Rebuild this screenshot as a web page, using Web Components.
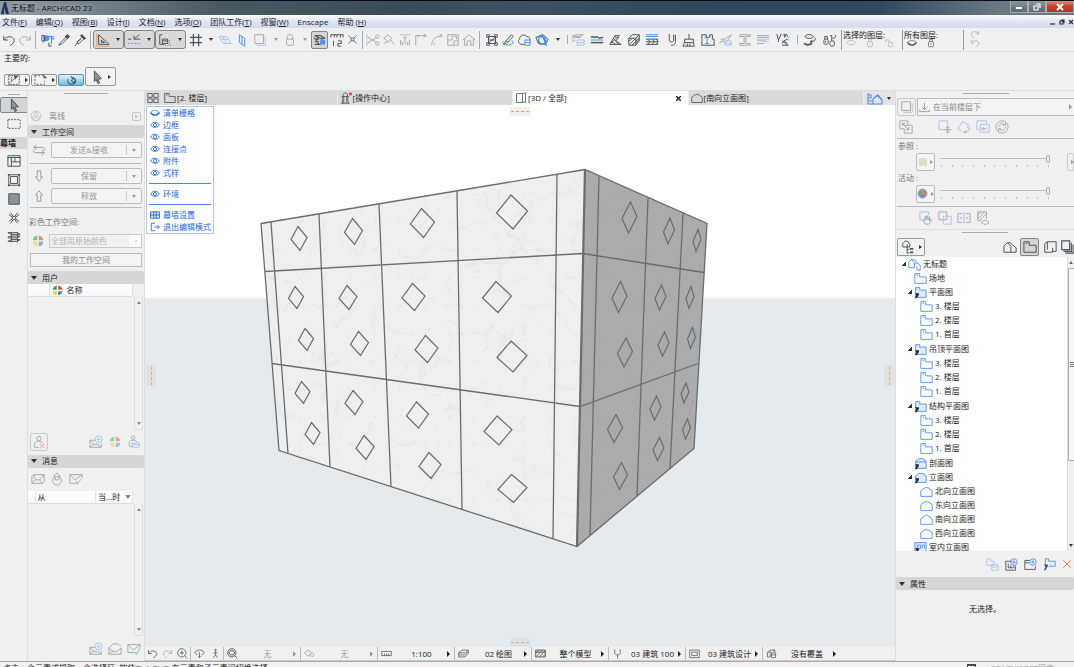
<!DOCTYPE html>
<html lang="zh-CN">
<head>
<meta charset="utf-8">
<title>无标题 - ARCHICAD 23</title>
<style>
    html, body {
        margin: 0;
        height: 100%;
        overflow: hidden;
    }
    body {
        font: 8px/12px "Open Sans", "Noto Sans CJK SC", sans-serif;
        color: #222;
        background: #f0f0f0;
    }
</style>
</head>
<body>
<cad-app></cad-app>

<script>
// Icon artwork, 16x16. "b" = blue accent stroke, "k" = solid fill
const ICONS = {
    undo: '<path d="M2 3v5h5M2 8c3-5 11-5 12 0 0 3-2 5-5 6"/>',
    redo: '<path d="M14 3v5H9M14 8C11 3 3 3 2 8c0 3 2 5 5 6"/>',
    find: '<circle class="bf" cx="6" cy="6" r="3.5"/><path d="M2 2l2 2M2 11l2-2M9 11v4h3M1 3h3v6H1z"/><path class="b" d="M8 4h6v4M12 5v8M10 3l4 4"/>',
    pick: '<path class="k" d="M9 4l3-3 3 3-3 3z"/><path d="M10 5L4 11 2 14l4-2 6-6"/><path class="b" d="M3 12l5-5"/>',
    inject: '<path class="k" d="M8 3l2-2 5 5-2 2z"/><path d="M10 5L5 10M12 7l-5 5H5v-3M5 11l-3 4"/><path class="b" d="M5 11l4-4"/>',
    guide: '<path d="M3 2v11h12zM6 8v3h4z"/><path class="o" d="M1 1v14h14"/>',
    snap: '<path d="M1 7h4M14 2L8 7h7M8 3v4"/><path class="b" stroke-dasharray="2 2" d="M1 12h14"/>',
    tracker: '<path d="M2 2v11h5M2 2h3M5 7h6v5H5zM5 9h6"/><path stroke-dasharray="1 2" d="M8 14h7M13 8v5"/>',
    grid: '<path d="M5 1v14M11 1v14M1 5h14M1 11h14" stroke-width="1.4"/>',
    plane: '<path class="b" d="M1 4h9l5 8H6zM5 4l5 8M3 7h9"/>',
    vplane: '<path class="b" d="M5 2l6 4v9l-6-4zM8 4v9"/>',
    box: '<path d="M2 2h10v10H2z"/><path class="b" d="M4 14h10V4"/>',
    lock: '<rect x="4" y="7" width="8" height="7" rx="1"/><path d="M5 7V4c0-3 6-3 6 0v3"/>',
    trace: '<path d="M2 3h6l6 3H8zM2 7h5M2 13h7M2 10h4v3M5 3v4M9 6l4 7M1 5l4 5" stroke-width="1.2"/><circle class="bf" cx="11" cy="10" r="3"/>',
    ruler: '<path d="M1 2h14v3M1 2v3M5 2v3M8 2v3M12 2v3M4 9v6M9 9h4v3H9v3h4"/>',
    burst: '<path d="M2 2l4 4M14 2l-4 4M2 14l4-4M14 14l-4-4M6 6h4v4H6z"/>',
    scissors: '<path d="M1 4l11 7M1 12l11-7"/><path class="b" d="M1 1v14" stroke-dasharray="2 2"/><circle cx="13" cy="12" r="2"/><circle cx="13" cy="4" r="2"/>',
    axe: '<path d="M2 6l5-4 4 4-4 5-2-3zM9 7l5 6M2 12l4-2"/>',
    adjust: '<path class="b" d="M2 2h12"/><path d="M8 4v9M6 6l2-2 2 2M3 8v6M13 8v6M5 10v4M11 10v4"/>',
    corner: '<path d="M2 14V3h12M5 3v2M11 1l3 2-3 2"/>',
    fillet: '<path d="M2 14c0-6 4-10 11-11M5 14v-2M11 5l3-2-3-2"/>',
    resize: '<path d="M2 2h12v12H2zM2 8h5V2M9 14V9h5M9 4h3v3"/>',
    house: '<path d="M1 8l7-6 7 6M3 7v7h3V9h4v5h3V7"/>',
    group: '<rect x="4" y="4" width="8" height="8"/><path d="M2 2h3v3H2zM11 2h3v3h-3zM2 11h3v3H2zM11 11h3v3h-3zM4 12l8-8M4 8h8"/>',
    pen: '<path d="M4 11l8-9 2 2-8 8-3 1zM6 9l2 2"/><path class="b" d="M3 9c-4 3 3 6 9 4 3-2 2-4 0-4"/>',
    cloud: '<path d="M8 13H5c-4-1-4-5-2-6 0-5 6-6 8-3 3 0 4 2 4 4"/><path class="b" d="M9 8h6v6H9zM9 11h6"/>',
    cubes: '<path d="M1 5l8-3 6 5-3 6-8-1z"/><path class="b" d="M5 4l6 1 2 6-6 2-3-4zM8 1l5 14" stroke-width="1.5"/>',
    layers: '<path d="M1 4l4-2h9l-4 2zM1 7l4-2h6M5 8l-4 2"/><path class="b" d="M7 8h8v6H7zM7 11h8"/>',
    waves: '<path d="M1 5c2-2 3 0 4 0s2-2 4 0 3 0 6 0" stroke-width="1.6"/><path class="b" d="M1 8h14"/><path d="M1 11h14" stroke-width="1.6"/>',
    hatchA: '<path d="M2 13L8 3h5l-4 6 6 4zM4 10l5 3M6 6l6 7M8 4l4 2M3 12l6-6"/>',
    hatchB: '<path d="M2 6l4-4h8v7l-4 5H2zM2 6h8v8M10 6l4-4M2 10l4-4M3 13l7-7M6 14l8-9M10 12l4-5"/>',
    strata: '<path class="b" d="M1 2h14M1 4h14"/><path d="M1 7h14M1 10h14M1 13h14M3 7l3 3-3 3M8 7l3 3-3 3M13 7l2 3-2 3"/>',
    magnet: '<path d="M6 1v7c0 3 5 3 5 0V2M13 2v8c0 4-4 4-5 4"/>',
    brush: '<path d="M8 1v6M3 7h10v4H3zM3 11l-2 4h13l-1-4M6 12v3M9 12v3"/>',
    plan: '<path d="M1 2h5v3h4V2h3v5h2v7H1z"/><path class="b" d="M4 5h6M7 5v7M5 12h4"/>',
    note: '<path d="M5 8l9-6-5 8M1 10h6M2 7h4"/><path class="b" d="M7 9h7v5H7zM7 12h7M1 12c0-3 4-4 6-2"/>',
    beam: '<path d="M2 2h12v2H9v8h5v2H2v-2h5V4H2z"/>',
    stack: '<path d="M1 3h14M1 5h14M1 9h10M1 12h8"/><path class="b" d="M1 7h14M9 10h6"/>',
    hatchC: '<path d="M2 1l2 7 3-7M4 8v2M9 3l2-2v4l2-4 2 4M8 9l7 5M8 12l5-5 2 1M8 14h7M10 8l4 4"/>',
    eyeSwap: '<path d="M2 4c3-3 7-3 10 0-3 3-7 3-10 0M13 5c3 3-1 5-4 5M11 8l-3 2 3 2"/><path d="M1 12c3 2 6 2 9 0" stroke-width="2"/>',
    lockSwap: '<rect x="1" y="7" width="5" height="6" rx="2"/><path d="M2 7V4h3v3"/><rect x="8" y="9" width="5" height="6" rx="2"/><path d="M10 9V3H8M11 6c4 0 4-2 3-4M3 9v2"/>',
    eye: '<path d="M1 8c4-6 10-6 14 0-4 5-10 5-14 0z" stroke-width="1.4"/><circle cx="8" cy="8" r="2.5" stroke-width="1.4"/>',
    eyeShut: '<path d="M1 7c3-4 11-4 14 0"/><path d="M1 7c3 6 11 6 14 0" stroke-width="2"/>',
    eyeOpen: '<path d="M1 7c4-4 10-4 14 0-3 5-11 5-14 0z"/>',
    padlock: '<rect x="4" y="6" width="8" height="8" rx="2"/><path d="M6 6V2h4v4M8 9v2"/>',
    unlock: '<rect x="7" y="7" width="7" height="7" rx="2"/><path d="M8 7V3H3v4"/>',
    arrow: '<path class="g" d="M5 1l8 9-4 .5 2 4-2 1-2-4.5-2 2z"/>',
    marquee: '<path d="M1 3h14v10H1z" stroke-dasharray="2 1.5"/>',
    pickbox: '<path d="M1 3h9M1 3v10h11V9" stroke-dasharray="2 2"/><path class="k" d="M10 1l5 5h-4z"/>',
    wallpick: '<path d="M2 3h12v10H2zM2 13l5-5M5 9V5l3 3" stroke-dasharray="2 1"/><path class="k" d="M8 3h5L9 8z"/>',
    spin: '<path d="M3 6c-2 4 2 9 7 7 5-1 5-7 1-9M11 4L8 8l3 3 3-3zM7 2l3 3" stroke-width="1.5"/>',
    scheme: '<path d="M1 2h14v12H1zM1 4h14M5 4v10M9 4v5h6M5 9h4"/>',
    frame: '<path d="M2 2h12v12H2z"/><path d="M4 4h8v8H4z"/><path class="k" d="M1 1h2v2H1zM13 1h2v2h-2zM1 13h2v2H1zM13 13h2v2h-2z"/>',
    panel: '<path class="g" d="M2 2h12v12H2z"/>',
    joint: '<path d="M2 4l4 3M14 4l-4 3M2 12l4-3M14 12l-4-3M4 2l3 4M12 2L9 6M4 14l3-4M12 14l-3-4"/><circle cx="8" cy="8" r="2"/>',
    accessory: '<path d="M1 3l4 2h10l-3-2zM1 8l4-1h10l-3 2H1M1 13l4-2h10l-4 2zM5 2v12M12 3v11"/>',
    tiles: '<path d="M1 2h6v5H1zM9 2h6v5H9zM1 9h6v5H1zM9 9h6v5H9z"/>',
    folder: '<path d="M1 2h6v4h8v8H1zM3 4h2"/>',
    lighthouse: '<path d="M4 6l-1 9M10 6l1 9M2 6h10M4 6V3l3-2 3 2v3M5 6v9M9 6v9M1 15h12"/><circle cx="14" cy="2.5" r="2.2" fill="#f05030" stroke="none"/>',
    view3d: '<path d="M2 2h8v12H2zM10 2l4-1v13l-4-1"/>',
    elevation: '<path d="M1 14V7l4-3 3-1 3 1 4 3v7z"/>',
    town: '<path class="b" d="M1 3v11h14v-4l-4-5-5 4v5M1 5h3v3H1M1 11h5M8 6h3l3 3"/>',
    table: '<path d="M1 3h14v10H1zM1 8h14M6 3v10M10 3v10" stroke-width="1.6"/>',
    exit: '<path d="M8 2H2v12h6M7 8h8M12 5l3 3-3 3" stroke-width="1.4"/>',
    people: '<circle cx="8" cy="8" r="6.5"/><circle cx="8" cy="5" r="2"/><circle cx="5" cy="10" r="2"/><circle cx="11" cy="10" r="2"/>',
    expand: '<rect x="1" y="1" width="14" height="14" rx="2"/><path class="k" d="M6 5l4 3-4 3z"/>',
    swap: '<path d="M5 2L2 5l3 3M2 5h9c4 0 4 3 3 4M11 8l3 3-3 3M14 11H5c-4 0-4-2-3-3"/>',
    down: '<path d="M6 2h4v7h2l-4 5-4-5h2z"/>',
    up: '<path d="M6 14h4V7h2L8 2 4 7h2z"/>',
    wheel: '<path fill="#2fa866" stroke="none" d="M7 1v6H1a6 6 0 016-6z"/><path fill="#f0452e" stroke="none" d="M9 1v6h6a6 6 0 00-6-6z"/><path fill="#f5d322" stroke="none" d="M7 15V9H1a6 6 0 006 6z"/><path fill="#3f7fe8" stroke="none" d="M9 15V9h6a6 6 0 01-6 6z"/>',
    rgb: '<path fill="#e6725c" stroke="none" d="M8 8V2a6 6 0 015 9z"/><path fill="#58a88a" stroke="none" d="M8 8V2a6 6 0 00-5 9z"/><path fill="#6588d8" stroke="none" d="M8 8l5 3a6 6 0 01-10 0z"/><circle cx="8" cy="8" r="6.5"/>',
    userX: '<circle cx="8" cy="4" r="2.5"/><path d="M8 7c-5 0-6 3-5 7h5M8 7c2 0 4 1 4 2"/><path class="r" d="M9 10l5 5M14 10l-5 5"/>',
    userDoc: '<circle cx="7" cy="3" r="2"/><path d="M7 6c-5 0-5 4-4 7h3M7 6c3 0 4 1 4 2"/><path class="b" d="M6 9h8v5H6zM6 11h8"/>',
    mailPlus: '<path d="M1 6h6M1 6v8h13v-4M1 6l5 5h4M1 14l5-4M14 14l-4-3"/><circle class="b" cx="11" cy="5" r="4"/><path class="b" d="M11 3v4M9 5h4"/>',
    mail: '<path d="M3 3h12v8l-2 2H1V5zM1 13l4-4h5l3 4M3 3l2 6M15 3l-5 6"/>',
    upload: '<circle cx="8" cy="10" r="5"/><path d="M6 9V5H4l4-4 4 4h-2v4z"/>',
    mailEdit: '<path d="M1 3h14v4M1 3v10h7M1 3l6 6 8-6M9 14l5-6M8 10l2 4"/>',
    mailOpen: '<path d="M1 14V7l5-5h5M1 7l5 4h4l5-4v7H1l5-4"/><path class="b" d="M9 3h4l2 3"/>',
    mailOk: '<path d="M8 12H1V3h14v3M1 3l6 6 8-6"/><path class="gr" d="M8 11l3 3 4-8"/>',
    under: '<path d="M8 1v10M4 7l4 4 4-4M1 11v3h14v-3"/>',
    moveScale: '<path d="M1 1h9v5M1 1v9h5M7 6h8v9H6v-5M4 4l7 7M4 7V4h3M11 8v3H8"/>',
    boxMove: '<path class="b" d="M8 11H1V1h10v5"/><path d="M11 7v8M7 11h8M9 9l2-2 2 2M9 13l2 2 2-2"/>',
    boxRotate: '<path class="b" d="M6 2l7 3-1 4M6 2L1 10l5 3"/><path d="M14 8c1 4-2 6-6 6M10 12l-2 2 2 1"/>',
    boxBack: '<path class="b" d="M4 11H1V1h11v3M5 5h10v9H5z"/><path d="M12 10H7M9 8l-2 2 2 2"/>',
    refresh: '<circle cx="8" cy="8" r="7"/><path d="M4 8c0-4 6-5 7-2M12 8c0 4-6 5-7 2M9 6h3V3M7 10H4v3"/>',
    hand: '<path class="b" d="M6 10H1V1h10v4"/><path d="M7 15c-1-3-3-4-2-5l2 1V6l2 4V5l2 5 1-4v5l2-2c0 3-1 5-3 6z"/>',
    overlap: '<path d="M1 1h9v9H1z"/><path class="b" d="M6 6h9v9H6z"/>',
    split: '<path d="M6 3H1v10h5M10 3h5v10h-5M3 8h3M13 8h-3"/><path class="b" d="M8 1v14"/>',
    hatchEye: '<path d="M2 1h10v8M2 1v10h4M2 5l4-4M2 9l8-8M5 10l7-7M6 13c3-3 6-3 9 0-3 3-6 3-9 0z"/>',
    tree: '<path d="M2 8V4l3-3 3 1 2 3v3H7V5M2 8h5v7h2M7 11h2"/><path class="k" d="M10 9h4v2h-4zM10 13h4v2h-4z"/>',
    homes: '<path d="M1 14V7l4-4 4 4v7zM5 3h3l7 6v5H9"/>',
    book: '<path d="M5 2h10v11h-4M5 2v9M5 2L2 4v10h9V9"/>',
    docs: '<path d="M2 1h9v10H2zM4 13h9V3M6 15h9V5" stroke-width="1.3"/>',
    root: '<path class="b" d="M1 12V5l3-3 4 4v6zM8 8l3-2 4 3v6h-4v-5M4 2h3l5 4"/>',
    folderB: '<path class="b" d="M1 2h6v4h8v8H1zM3 4h2"/>',
    folderS: '<path class="b bfl" d="M2 2h5v3h8v9H2z"/><path class="k" d="M1 9h5v2L3 15H1l2-4z"/>',
    elevB: '<path class="b" d="M1 14V7l4-3 3-1 3 1 4 3v7z"/>',
    elevS: '<path class="b bfl" d="M2 14V6l4-3h5l4 3v8z"/><path class="k" d="M1 9h5v2L3 15H1l2-4z"/>',
    sectS: '<path class="b bfl" d="M2 14V5l4-3h5l4 3v9zM2 6h13"/><path class="k" d="M1 9h5v2L3 15H1l2-4z"/>',
    interior: '<path class="b bfl" d="M1 2h14v12H1zM4 5h4v4H4zM10 9V5h3v4"/><path class="k" d="M1 9h5v2L3 15H1l2-4z"/>',
    copyB: '<path class="b" d="M1 1h5v3h4v5H1z"/><path class="b" d="M7 8h8v7H7zM7 11h8"/>',
    addView: '<path d="M8 4H1v11h12v-5M4 7v5h7V9M7 12V9"/><circle class="b" cx="11" cy="5" r="4"/><path class="b" d="M11 3v4M9 5h4"/>',
    addFolder: '<path d="M7 3H1v11h13v-4M1 6h5"/><circle class="b" cx="11" cy="5" r="4"/><path class="b" d="M11 3v4M9 5h4"/>',
    link: '<path class="b" d="M3 8V1h4v3h8v6H7"/><path class="k" d="M1 8h5v2L3 15H1l2-4z"/>',
    cross: '<path class="r" d="M2 2l12 12M14 2L2 14"/>',
    zoomIn: '<circle cx="7" cy="7" r="6"/><path d="M7 4v6M4 7h6M11 11l4 4"/>',
    orbit: '<path d="M5 10C-1 8 1 3 8 3s9 5 3 7M8 6v8M6 12l2 2 2-2"/>',
    walk: '<circle cx="8" cy="3" r="1.2"/><path d="M8 5v5l-3 4M8 10l3 4M5 8l3-2 3 2"/>',
    fit: '<circle cx="7" cy="7" r="6"/><path d="M11 11l4 4M5 4L3 7l2 3M9 4l2 3-2 3M5 4h4M5 10h4"/>',
    loupe: '<path d="M1 7l5-4 5 4-5 5zM8 9l4 4 3-3-4-4"/>',
    scale: '<path d="M1 5h14v6H1zM5 8v3M8 8v3M11 8v3"/>',
    sheets: '<path d="M1 7l5-4h9l-4 4zM1 7v6h9l5-5V3M1 10h9l5-5"/>',
    hatch: '<path d="M1 3h14v10H1zM1 8l5-5M1 13L11 3M6 13l9-9M11 13l4-4M1 6h14" stroke-width="1.3"/>',
    fork: '<path d="M4 2v5c0 4 8 4 8 0V2M8 10v5"/>',
    viewOpt: '<path d="M1 3h14v11H1z"/><path d="M4 6h8v5H4z"/>',
    override: '<path d="M8 6H2v7h4V8M8 7h6v7H8zM8 10h6M4 6l2-3h6l2 2M12 2v4"/>'
};

// registers an element whose shadow root holds the given template
function define(name, html, setup) {
    const template = document.createElement('template');
    template.innerHTML = `<style>*{box-sizing:border-box}button,select,input{font:inherit;color:inherit;margin:0}</style>` + html;
    customElements.define(name, class extends HTMLElement {
        constructor() {
            super();
            this.attachShadow({ mode: 'open' });
        }
        connectedCallback() {
            if (this.shadowRoot.childNodes.length) return;
            const root = template.content.cloneNode(true);
            if (setup) setup(this, root);
            this.shadowRoot.appendChild(root);
        }
    });
}

define('ui-icon', `
<style>
:host { display: inline-block; flex: none; width: var(--icon, 14px); height: var(--icon, 14px); }
svg { display: block; width: 100%; height: 100%; fill: none; stroke: currentColor; stroke-width: 1.1; }
.b { stroke: #4a90f0; }
.bfl { fill: #dcebff; }
.bf { fill: #4a90f0; stroke: none; }
.o { stroke: #f29a4c; }
.r { stroke: #f0806c; stroke-width: 1.6; }
.gr { stroke: #4cb878; stroke-width: 1.6; }
.k { fill: currentColor; stroke: none; }
.g { fill: #8c9296; }
</style>
<svg viewBox="0 0 16 16" aria-hidden="true"></svg>
`, (el, root) => {
    root.querySelector('svg').innerHTML = ICONS[el.getAttribute('name')] || '';
});

define('tool-button', `
<style>
:host { display: block; flex: none; width: var(--w, 16px); color: #4b5459; }
:host([dim]) { opacity: .45; }
button { display: flex; align-items: center; justify-content: center; width: 100%; height: var(--h, 18px); padding: 0; border: 1px solid transparent; border-radius: 2px; background: none; }
:host([caret]) { --w: 11px; }
:host([boxed]) button { border-color: #9a9a9a; background: #f2f2f2; }
:host([pressed]) button { border-color: #858585; background: #d4d4d4; }
i { border: 2px solid transparent; border-top: 3px solid #333; border-bottom: 0; }
.side { margin-left: 4px; border: 2px solid transparent; border-left: 3px solid #333; border-right: 0; }
</style>
<button type="button"></button>
`, (el, root) => {
    const button = root.querySelector('button');
    const icon = el.getAttribute('icon');
    button.setAttribute('aria-label', el.getAttribute('label') || icon || '更多');
    if (icon) button.innerHTML = `<ui-icon name="${icon}"></ui-icon>`;
    if (el.hasAttribute('caret')) button.innerHTML += '<i></i>';
    if (el.hasAttribute('side')) button.innerHTML += '<i class="side"></i>';
    button.disabled = el.hasAttribute('dim');
});

define('tool-group', `
<style>
:host { display: flex; flex: none; align-items: center; gap: var(--gap, 0px); padding: 0 2px; height: 18px; }
:host([line]) { border-right: 1px solid #aaa; }
:host([lead]) { border-left: 1px solid #aaa; }
:host([framed]) { padding: 0; border: 1px solid #858585; border-radius: 3px; background: #d9d9d9; height: 19px; }
</style>
<slot></slot>
`);

define('title-bar', `
<style>
:host { display: flex; align-items: center; height: 15px; padding-left: 1px; border-top: 1px solid #0a0c10; background: linear-gradient(90deg, #909ba3, #78848d 8%, #4b5963 20%, #3b4a58 38%, #3f5160 48%, #33475a 65%, #34485c 82%, #6a7884 93%); color: #0b0b0b; text-shadow: 0 0 4px #cfd6da; }
.logo { width: 8px; height: 12px; margin-right: 2px; fill: #1d3464; }
span { flex: 1; }
.win { display: flex; align-self: flex-start; }
button { width: 18px; height: 12px; padding: 0; border: 1px solid #a5b0b8; border-top: 0; background: linear-gradient(#8b979f, #5b6771); display: grid; place-items: center; }
button:last-child { width: 28px; background: linear-gradient(#d99080, #c0402a 50%, #b03820); }
svg { width: 8px; height: 8px; fill: none; stroke: #fff; stroke-width: 2; display: block; }
.logo { stroke: none; }
</style>
<svg class="logo" viewBox="0 0 8 12"><path d="M0 12L3 0h2l3 12H5L3 5v7z"/></svg>
<span>无标题 - ARCHICAD 23</span>
<div class="win">
    <button aria-label="最小化"><svg viewBox="0 0 8 8"><path d="M1 5h6"/></svg></button>
    <button aria-label="还原"><svg viewBox="0 0 8 8"><path d="M3 1h4v4M1 3h4v4H1z" stroke-width="1.2"/></svg></button>
    <button aria-label="关闭"><svg viewBox="0 0 8 8"><path d="M1 1l6 6M7 1L1 7"/></svg></button>
</div>
`);

define('menu-bar', `
<style>
:host { display: flex; align-items: center; justify-content: space-between; height: 13px; padding: 0 0 0 2px; background: linear-gradient(#fafbfd, #dfe5f3 50%, #d3daed); }
nav { display: flex; gap: 9px; }
button { padding: 0; border: 0; background: none; line-height: 12px; white-space: pre; }
.mdi { display: flex; gap: 3px; }
svg { display: block; width: 6px; height: 6px; fill: none; stroke: #333; stroke-width: 1.2; }
</style>
<nav></nav>
<div class="mdi">
    <button aria-label="最小化"><svg viewBox="0 0 6 6"><path d="M0 5h5"/></svg></button>
    <button aria-label="还原"><svg viewBox="0 0 6 6"><path d="M2 1h3v3M1 2h3v3H1z"/></svg></button>
    <button aria-label="关闭"><svg viewBox="0 0 6 6"><path d="M1 1l4 4M5 1L1 5"/></svg></button>
</div>
`, (el, root) => {
    const menus = ['文件(F)', '编辑(Q)', '视图(B)', '设计(I)', '文档(N)', '选项(O)', '团队工作(T)', '视窗(W)', 'Enscape', '帮助 (H)'];
    root.querySelector('nav').innerHTML = menus
        .map(m => `<button type="button">${m.replace(/\((.)\)/, '(<u>$1</u>)')}</button>`).join('');
});

define('main-toolbar', `
<style>
:host { display: flex; align-items: center; height: 24px; border-bottom: 1px solid #ddd; overflow: hidden; }
.history { padding: 0 2px 0 1px; margin-right: 2px; }
.patterns { justify-content: space-between; width: 230px; height: 9px; padding-right: 7px; }
.toggles { --gap: 4px; height: 9px; padding: 0 3px 0 4px; }
.layer { flex: none; display: flex; flex-direction: column; height: 20px; line-height: 9px; padding: 0 4px 0 1px; border-left: 1px solid #999; --icon: 10px; --h: 9px; }
.layer.wide { width: 61px; }
.layer.turn { --w: 20px; }
.layer div { display: flex; gap: 3px; }
</style>
<tool-group class="history" line>
    <tool-button icon="undo" label="撤销"></tool-button><tool-button icon="redo" label="重做" dim></tool-button>
</tool-group>
<tool-group line>
    <tool-button icon="find"></tool-button><tool-button icon="pick"></tool-button><tool-button icon="inject"></tool-button>
</tool-group>
<tool-group framed style="margin-left:2px"><tool-button icon="guide" style="--w:18px"></tool-button><tool-button caret></tool-button></tool-group>
<tool-group framed><tool-button icon="snap" style="--w:18px"></tool-button><tool-button caret></tool-button></tool-group>
<tool-group framed><tool-button icon="tracker" style="--w:18px"></tool-button><tool-button caret></tool-button></tool-group>
<tool-group style="--gap:1px">
    <tool-button icon="grid"></tool-button><tool-button caret></tool-button>
    <tool-button icon="plane" dim></tool-button><tool-button icon="vplane"></tool-button>
    <tool-button icon="box" dim style="--w:18px"></tool-button><tool-button caret dim></tool-button>
    <tool-button icon="lock" dim></tool-button><tool-button caret dim></tool-button>
    <tool-button icon="trace" pressed style="--w:17px"></tool-button><tool-button icon="ruler" style="--w:15px"></tool-button>
    <tool-button icon="burst" style="--w:15px;--icon:11px"></tool-button>
</tool-group>
<tool-group lead line>
    <tool-button icon="scissors" dim></tool-button><tool-button icon="axe" dim></tool-button><tool-button icon="adjust" dim></tool-button>
    <tool-button icon="corner" dim></tool-button><tool-button icon="fillet" dim></tool-button><tool-button icon="resize" dim></tool-button>
    <tool-button icon="house" dim></tool-button>
</tool-group>
<tool-group style="padding:0 4px">
    <tool-button icon="group"></tool-button><tool-button icon="pen"></tool-button><tool-button icon="cloud"></tool-button>
    <tool-button icon="cubes" style="--w:20px"></tool-button><tool-button caret></tool-button>
</tool-group>
<tool-group class="patterns" lead>
    <tool-button icon="layers" dim></tool-button><tool-button icon="waves"></tool-button><tool-button icon="hatchA"></tool-button>
    <tool-button icon="hatchB"></tool-button><tool-button icon="strata"></tool-button><tool-button icon="magnet"></tool-button>
    <tool-button icon="brush"></tool-button><tool-button icon="plan"></tool-button><tool-button icon="note" dim></tool-button>
    <tool-button icon="beam" dim></tool-button><tool-button icon="stack" dim></tool-button><tool-button icon="hatchC"></tool-button>
</tool-group>
<tool-group class="toggles" lead>
    <tool-button icon="eyeSwap"></tool-button><tool-button icon="lockSwap"></tool-button>
</tool-group>
<div class="layer wide">选择的图层:<div><tool-button icon="eyeOpen" dim></tool-button><tool-button icon="padlock" dim></tool-button><tool-button icon="unlock" dim></tool-button></div></div>
<div class="layer wide">所有图层:<div><tool-button icon="eyeShut"></tool-button><tool-button icon="padlock"></tool-button></div></div>
<div class="layer turn"><tool-button icon="redo" dim></tool-button><tool-button icon="undo" dim></tool-button></div>
`);

define('info-box', `
<style>
:host { display: block; height: 39px; padding-left: 4px; border-bottom: 1px solid #ddd; overflow: hidden; }
label { display: block; height: 12px; line-height: 11px; }
div { display: flex; align-items: flex-end; gap: 1px; padding-top: 3px; --h: 12px; --w: 26px; }
.big { --h: 19px; --w: 31px; }
.on { background: linear-gradient(#e2f2fb, #6fb9e2); border: 1px solid #5d93b3; border-radius: 2px; --icon: 11px; --h: 10px; --w: 24px; }
</style>
<label>主要的:</label>
<div>
    <tool-button icon="wallpick" side boxed></tool-button>
    <tool-button icon="pickbox" side boxed></tool-button>
    <span class="on"><tool-button icon="spin"></tool-button></span>
    <tool-button icon="arrow" class="big" side boxed></tool-button>
</div>
`);

define('tool-box', `
<style>
:host { display: flex; flex-direction: column; align-items: center; width: 28px; border-right: 1px solid #ddd; overflow: hidden; }
hr { width: 12px; margin: 3px 0 2px; border: 0; border-top: 1px solid #aaa; }
tool-button { --w: 28px; --h: 19px; }
h2 { align-self: stretch; margin: 2px 0; font: inherit; font-weight: bold; background: #d6d6d6; }
.set { display: flex; flex-direction: column; }
</style>
<hr>
<tool-button icon="arrow" pressed style="--h:16px"></tool-button>
<tool-button icon="marquee" style="--h:22px"></tool-button>
<h2>幕墙</h2>
<div class="set">
    <tool-button icon="scheme"></tool-button><tool-button icon="frame"></tool-button><tool-button icon="panel"></tool-button>
    <tool-button icon="joint"></tool-button><tool-button icon="accessory"></tool-button>
</div>
`);

define('palette-header', `
<style>
:host { display: flex; flex: none; align-items: center; gap: 5px; height: 13px; padding-left: 3px; background: #d6d6d6; border-radius: 2px; }
h2 { margin: 0; font: inherit; }
i { border: 3px solid transparent; border-top: 4px solid #333; border-bottom: 0; }
</style>
<i></i><h2><slot></slot></h2>
`);

define('split-button', `
<style>
:host { display: flex; flex: 1; height: 16px; border: 1px solid #bbb; border-radius: 2px; background: #f3f3f3; color: #999; }
button { padding: 0; border: 0; background: none; flex: 1; }
.more { flex: 0 0 15px; display: grid; place-items: center; }
.more i { border: 2px solid transparent; border-top: 3px solid #999; border-bottom: 0; }
.more { background: linear-gradient(#ccc, #ccc) left center / 1px 10px no-repeat; }
</style>
<button type="button" disabled><slot></slot></button><button type="button" class="more" aria-label="更多" disabled><i></i></button>
`);

define('list-box', `
<style>
:host { display: flex; flex: 1; min-height: 0; }
.list { flex: 1; }
.bar { width: 9px; border: 1px solid #ddd; border-top: 0; display: flex; flex-direction: column; justify-content: space-between; align-items: center; padding: 4px 0; margin-right: 1px; }
i { border: 2px solid transparent; border-bottom: 3px solid #888; border-top: 0; }
i + i { border-top: 3px solid #888; border-bottom: 0; }
</style>
<div class="list"></div><div class="bar"><i></i><i></i></div>
`);

define('team-panel', `
<style>
:host { display: flex; flex-direction: column; width: 117px; border-right: 1px solid #ddd; color: #222; }
.grip { width: 44px; flex: none; margin: 2px auto 15px; border-top: 1px solid #aaa; }
.row { flex: none; display: flex; align-items: center; gap: 5px; padding: 0 2px 0 4px; height: 20px; color: #999; }
.row.status { height: 14px; margin-bottom: 2px; padding-left: 2px; gap: 7px; color: #888; --w: 12px; --icon: 12px; }
.status ui-icon { opacity: .5; }
.status span { flex: 1; }
.row.send { height: 24px; }
hr { flex: none; width: 112px; margin: 1px auto 2px; border: 0; border-top: 1px solid #bbb; }
.label { color: #777; padding-left: 1px; height: 23px; line-height: 24px; }
select { flex: 1; min-width: 0; height: 14px; padding: 0 1px; border: 1px solid #bbb; background: linear-gradient(#fff, #fff) right / 12px 100% no-repeat; appearance: none; color: #999; }
.colors { height: 16px; --icon: 12px; }
.colors ui-icon { opacity: .6; }
.pick { flex: 1; display: grid; }
.pick > * { grid-area: 1 / 1; }
.pick i { justify-self: end; align-self: center; margin-right: 4px; border: 2px solid transparent; border-top: 3px solid #999; border-bottom: 0; }
.wide { flex: none; height: 14px; margin: 4px 2px; padding: 0; border: 1px solid #bbb; background: #f3f3f3; color: #888; }
table { flex: none; width: 105px; table-layout: fixed; border-collapse: collapse; background: linear-gradient(#fff, #f4f7fa); border-bottom: 1px solid #ddd; }
th { font-weight: normal; text-align: left; padding: 0 0 0 2px; line-height: 12px; height: 12px; border-right: 1px solid #e2e2e2; white-space: nowrap; --icon: 11px; }
th ui-icon { vertical-align: middle; margin-right: 4px; }
th b { display: inline-block; margin: 0 0 1px 5px; border: 3px solid transparent; border-top: 4px solid #888; border-bottom: 0; }
.tools { gap: 3px; padding: 0 2px; justify-content: flex-end; height: 25px; }
.tools.msg { justify-content: flex-start; height: 23px; }
.sp { flex: 1; }
</style>
<div class="grip"></div>
<div class="row status"><ui-icon name="people"></ui-icon><span>离线</span><tool-button icon="expand" dim style="--icon:9px"></tool-button></div>
<palette-header>工作空间</palette-header>
<div class="row send"><ui-icon name="swap"></ui-icon><split-button>发送&amp;接收</split-button></div>
<hr>
<div class="row"><ui-icon name="down"></ui-icon><split-button>保留</split-button></div>
<div class="row"><ui-icon name="up"></ui-icon><split-button>释放</split-button></div>
<hr>
<label class="label" for="colors">彩色工作空间:</label>
<div class="row colors"><ui-icon name="wheel"></ui-icon><div class="pick"><select id="colors" disabled><option>全部用原始颜色</option></select><i></i></div></div>
<button class="wide" type="button" disabled>我的工作空间</button>
<palette-header>用户</palette-header>
<table><thead><tr><th style="width:21px" aria-label="状态"></th><th><ui-icon name="wheel"></ui-icon>名称</th></tr></thead></table>
<list-box></list-box>
<div class="row tools"><tool-button icon="userX" boxed style="--w:18px" dim></tool-button><span class="sp"></span><tool-button icon="mailPlus" dim></tool-button><tool-button icon="wheel" dim style="--icon:12px"></tool-button><tool-button icon="userDoc" dim></tool-button></div>
<palette-header>消息</palette-header>
<div class="row tools msg"><tool-button icon="mail" dim></tool-button><tool-button icon="upload" dim></tool-button><tool-button icon="mailEdit" dim></tool-button></div>
<table><thead><tr><th style="width:7px" aria-label="状态"></th><th>从</th><th style="width:37px">当...时<b></b></th></tr></thead></table>
<list-box></list-box>
<div class="row tools"><tool-button icon="mailPlus" dim></tool-button><tool-button icon="mailOpen" dim></tool-button><tool-button icon="mailOk" dim></tool-button></div>
`);

define('view-tab', `
<style>
:host { display: flex; align-items: center; gap: 1px; padding: 0 5px 0 2px; min-width: 0; background: #dadada; border-left: 1px solid #ececec; color: #222; --icon: 12px; }
:host([active]) { background: #fff; }
span { flex: 1; white-space: nowrap; }
button { display: grid; place-items: center; width: 8px; height: 10px; padding: 0; border: 0; background: none; }
svg { width: 5px; height: 5px; stroke: #222; stroke-width: 1.4; }
ui-icon { color: #555; }
</style>
<ui-icon></ui-icon><span>[<slot></slot>]</span>
`, (el, root) => {
    root.querySelector('ui-icon').setAttribute('name', el.getAttribute('icon'));
    if (el.hasAttribute('active')) {
        const close = document.createElement('button');
        close.setAttribute('aria-label', '关闭');
        close.innerHTML = '<svg viewBox="0 0 5 5"><path d="M0 0l5 5M5 0L0 5"/></svg>';
        root.appendChild(close);
    }
});

define('edit-palette', `
<style>
:host { display: block; width: 68px; border: 1px solid #a9c6f5; background: #fff; color: #2266ee; }
button { display: flex; align-items: center; gap: 3px; width: 100%; height: 12px; padding: 0 0 0 3px; border: 0; background: none; line-height: 12px; white-space: nowrap; --icon: 10px; }
hr { margin: 4px 2px; border: 0; border-top: 1px solid #4a86e8; }
</style>
`, (el, root) => {
    const items = [['eyeShut', '清单栅格'], ['eye', '边框'], ['eye', '面板'], ['eye', '连接点'], ['eye', '附件'], ['eye', '式样'],
        null, ['eye', '环境'], null, ['table', '幕墙设置'], ['exit', '退出编辑模式']];
    const holder = document.createElement('div');
    holder.innerHTML = items.map(i => i
        ? `<button type="button"><ui-icon name="${i[0]}"></ui-icon>${i[1]}</button>` : '<hr>').join('');
    root.appendChild(holder);
});

// the model itself: panel faces with their diamond openings
define('wall-view', `
<style>
:host { display: block; min-height: 0; }
svg { display: block; width: 100%; height: 100%; }
.edge { fill: none; stroke: #6c6c6c; stroke-width: 1.3; }
.corner { fill: none; stroke: #6c6c6c; stroke-width: 2.2; }
.dia { fill: none; stroke: #6c6c6c; stroke-width: 1.2; }
</style>
<svg viewBox="145 104 750 543" preserveAspectRatio="xMidYMid slice" role="img" aria-label="3D">
    <defs>
        <filter id="marble" x="0" y="0" width="1" height="1">
            <feTurbulence type="turbulence" baseFrequency=".04 .036" numOctaves="3" seed="11"/>
            <feColorMatrix values="0 0 0 0 .3  0 0 0 0 .3  0 0 0 0 .3  -6 0 0 0 1"/>
            <feComposite in2="SourceGraphic" operator="in"/>
        </filter>
    </defs>
    <rect x="-400" y="0" width="1800" height="298" fill="#fff"/>
    <rect x="-400" y="298" width="1800" height="600" fill="#e4eaed"/>
    <path fill="#efefef" d="M261 223L585 169 577 546 279 450z"/>
    <path fill="#ababab" d="M585 169L707 223 694 448 577 546z"/>
    <path filter="url(#marble)" opacity=".1" d="M261 223L585 169 707 223 694 448 577 546 279 450z"/>
    <path class="edge" d="M261 223L585 169 707 223 694 448 577 546 279 450zM271 222L288 453M319 214L330 467M379 204L391 486M457 191L462 509M557 174L553 538M265 271L583 253 704 272M272 363L580 406 698 363M599 176L590 535M648 197L637 495M683 213L670 468"/>
    <path class="corner" d="M585 169L577 546"/>
    <path class="dia"/>
    <path fill="none" stroke="#c77fd0" stroke-width=".8" d="M692 399l1 2-5 15"/>
</svg>
`, (el, root) => {
    // centre x, centre y, half width, half height
    const diamonds = [
        [299, 238, 8, 12], [353.5, 231, 9, 13], [422.5, 222.5, 12, 14.5], [512, 211.5, 15.5, 17],
        [296, 297, 7.5, 11], [348, 297, 9, 12], [413.5, 296.5, 11.5, 13.5], [497, 296.5, 14.5, 15.5],
        [306, 339, 7.5, 11], [359.5, 343, 9, 12], [426.5, 348.5, 11.5, 13.5], [512, 356, 15, 15.5],
        [302.5, 392, 7.5, 11], [354, 402, 9, 12], [417.5, 414.5, 11, 13], [498, 430, 14, 14.5],
        [312.5, 433, 7.5, 11], [365, 447, 9, 12], [430, 465, 11, 13], [512.5, 488, 14.5, 14],
        [629.5, 217, 7.5, 15.5], [669, 230.5, 5.5, 13], [697, 240, 4, 11],
        [619.5, 296.5, 7.5, 15.5], [660.5, 297, 5.5, 12.5], [690, 297, 4, 11],
        [625, 352, 7.5, 14.5], [663.5, 343.5, 5.5, 12], [691.5, 337.5, 4, 10.5],
        [615, 428, 7.5, 14], [655.5, 407.5, 5.5, 12], [685, 392.5, 4, 10],
        [620.5, 475.5, 7, 13.5], [658.5, 448.5, 5.5, 11.5], [686.5, 428.5, 4, 10]
    ];
    root.querySelector('.dia').setAttribute('d', diamonds.map(([x, y, w, h]) => {
        const t = x > 600 ? -1 : 1;
        return `M${x - t} ${y - h}L${x + w} ${y - 1} ${x + t} ${y + h} ${x - w} ${y + 1}z`;
    }).join(''));
});

define('view-option', `
<style>
:host { display: flex; flex: 0 1 77px; align-items: center; padding: 0 4px 0 3px; border-right: 1px solid #bbb; --icon: 11px; white-space: nowrap; }
:host([dim]) { color: #999; }
:host([plain]) { border: 0; }
button { display: flex; flex: 1; align-items: center; padding: 0; border: 0; background: none; line-height: 13px; }
ui-icon { color: #555; }
:host([dim]) ui-icon { color: #999; }
:host([icon=fit]) ui-icon { color: #333; }
span { flex: 1; text-align: center; padding-left: 4px; }
i { border: 3px solid transparent; border-left: 3px solid currentColor; border-right: 0; }
</style>
<button type="button"><ui-icon></ui-icon><span><slot></slot></span><i></i></button>
`, (el, root) => {
    root.querySelector('ui-icon').setAttribute('name', el.getAttribute('icon'));
    root.querySelector('button').disabled = el.hasAttribute('dim');
});

define('view-area', `
<style>
:host { display: flex; flex-direction: column; min-width: 0; }
.tabs { flex: none; display: grid; grid-template-columns: 16px repeat(4, 1fr) 32px; height: 14px; background: #dadada; --icon: 12px; --h: 14px; }
.tabs .pop { display: flex; align-items: center; padding-left: 3px; border-left: 1px solid #ececec; background: #e4e4e4; --icon: 16px; }
.stage { position: relative; flex: 1; min-height: 0; display: grid; }
edit-palette { position: absolute; left: 1px; top: 1px; }
.grip { position: absolute; background: #dfe2e3; display: grid; place-items: center; }
.grip::before { content: ""; border: 0 dashed #f2a45c; }
.h { width: 20px; height: 9px; left: calc(50% - 10px); }
.h::before { width: 18px; border-top-width: 1px; }
.h.top { top: 2px; background: #f0f0f0; }
.h.bottom { bottom: 0; }
.v { width: 10px; height: 21px; top: 48%; }
.v::before { height: 18px; border-left-width: 1px; }
.v.left { left: 1px; }
.v.right { right: 1px; }
.options { flex: none; display: flex; height: 14px; border-bottom: 1px solid #ccc; }
.nav { display: flex; align-items: center; --w: 15px; --icon: 11px; --h: 12px; border-right: 1px solid #bbb; }
</style>
<div class="tabs">
    <tool-button icon="tiles"></tool-button>
    <view-tab icon="folder">2. 楼层</view-tab>
    <view-tab icon="lighthouse">操作中心</view-tab>
    <view-tab icon="view3d" active>3D / 全部</view-tab>
    <view-tab icon="elevation">南向立面图</view-tab>
    <div class="pop"><tool-button icon="town"></tool-button><tool-button caret></tool-button></div>
</div>
<div class="stage">
    <wall-view></wall-view>
    <edit-palette></edit-palette>
    <div class="grip h top"></div>
    <div class="grip h bottom"></div>
    <div class="grip v left"></div>
    <div class="grip v right"></div>
</div>
<div class="options">
    <div class="nav"><tool-button icon="undo"></tool-button><tool-button icon="redo" dim></tool-button><tool-button icon="zoomIn"></tool-button></div>
    <div class="nav" style="--w:16px"><tool-button icon="orbit"></tool-button><tool-button icon="walk"></tool-button></div>
    <view-option icon="fit" dim>无</view-option>
    <view-option icon="loupe" dim>无</view-option>
    <view-option icon="scale">1:100</view-option>
    <view-option icon="sheets">02 绘图</view-option>
    <view-option icon="hatch">整个模型</view-option>
    <view-option icon="fork">03 建筑 100</view-option>
    <view-option icon="viewOpt">03 建筑设计</view-option>
    <view-option icon="override" plain>没有覆盖</view-option>
</div>
`);

define('opacity-row', `
<style>
:host { display: block; height: 32px; color: #777; }
label { display: block; padding-left: 1px; line-height: 14px; height: 14px; }
.row { display: flex; padding-left: 19px; --h: 18px; }
.track { width: 110px; margin-left: 5px; }
input { display: block; width: 100%; height: 12px; appearance: none; background: linear-gradient(#bbb, #bbb) center / 100% 1px no-repeat; }
input::-webkit-slider-thumb { appearance: none; width: 4px; height: 8px; border: 1px solid #aaa; border-radius: 2px; background: #f0f0f0; }
.ticks { display: flex; justify-content: space-between; padding: 0 1px; }
.ticks i { width: 1px; height: 2px; background: #bbb; }
.end { margin-left: auto; --w: 7px; --icon: 0px; overflow: hidden; }
.sw { display: flex; align-items: center; justify-content: center; gap: 3px; width: 19px; height: 18px; padding: 0; border: 1px solid #bbb; border-radius: 2px; background: #f4f4f4; --icon: 11px; }
.sw::after { content: ""; border: 2px solid transparent; border-left: 3px solid #999; border-right: 0; }
.sw b { width: 8px; height: 8px; background: #e0dfc4; }
</style>
<label for="range"><slot></slot></label>
<div class="row">
    <button class="sw" type="button" aria-label="颜色"></button>
    <div class="track"><input id="range" type="range" value="100" disabled><div class="ticks"></div></div>
</div>
`, (el, root) => {
    const wheel = el.hasAttribute('wheel');
    root.querySelector('.ticks').innerHTML = '<i></i>'.repeat(11);
    root.querySelector('.sw').innerHTML = wheel ? '<ui-icon name="rgb"></ui-icon>' : '<b></b>';
    if (!wheel) {
        root.querySelector('.row').insertAdjacentHTML('beforeend', '<tool-button class="end" boxed side dim label="更多"></tool-button>');
    }
});

define('trace-palette', `
<style>
:host { display: flex; flex-direction: column; flex: none; height: 139px; padding-left: 1px; border-bottom: 1px solid #ddd; color: #888; }
.grip { flex: none; width: 46px; margin: 2px auto 4px; border-top: 1px solid #aaa; }
.ref { display: flex; gap: 1px; --w: 19px; --h: 18px; }
.where { flex: 1; display: flex; align-items: center; gap: 3px; height: 18px; padding: 0 2px 0 1px; border: 1px solid #bbb; border-right: 0; background: #f3f3f3; text-align: left; --icon: 11px; }
.where span { flex: 1; }
.where i { border: 3px solid transparent; border-left: 3px solid #999; border-right: 0; }
.icons { display: flex; align-items: center; height: 22px; gap: 3px; padding-left: 1px; }
.icons + hr + opacity-row { color: #777; }
.icons .gap { width: 17px; }
.icons.view { height: 23px; padding-left: 21px; }
hr { width: 100%; margin: 0; border: 0; border-top: 1px solid #bbb; }
.low { margin-top: 3px; }
</style>
<div class="grip"></div>
<div class="ref"><tool-button icon="box" boxed dim></tool-button><button type="button" class="where" disabled><ui-icon name="under"></ui-icon><span>在当前楼层下</span><i></i></button></div>
<div class="icons"><tool-button icon="moveScale" dim></tool-button><span class="gap"></span><tool-button icon="boxMove" dim></tool-button><tool-button icon="boxRotate" dim></tool-button><tool-button icon="boxBack" dim></tool-button><tool-button icon="refresh" dim></tool-button></div>
<hr>
<opacity-row>参照 :</opacity-row>
<opacity-row wheel>活动 :</opacity-row>
<hr class="low">
<div class="icons view"><tool-button icon="hand" dim></tool-button><tool-button icon="overlap" dim></tool-button><tool-button icon="split" dim></tool-button><tool-button icon="hatchEye" dim></tool-button></div>
`);

define('tree-node', `
<style>
:host { display: block; }
.row { display: flex; align-items: center; gap: 2px; height: 14px; line-height: 14px; white-space: nowrap; --icon: 13px; }
i { width: 4px; height: 4px; background: linear-gradient(135deg, transparent 50%, #333 50%); visibility: hidden; }
.open { visibility: visible; }
.kids { padding-left: 6px; }
.group { margin-bottom: 1px; }
</style>
<div class="row"><i></i><ui-icon></ui-icon><span></span></div>
<div class="kids"><slot></slot></div>
`, (el, root) => {
    root.querySelector('ui-icon').setAttribute('name', el.getAttribute('icon'));
    root.querySelector('span').textContent = el.getAttribute('label');
    if (el.children.length) {
        root.querySelector('i').className = 'open';
        if (el.getAttribute('icon') === 'folderS') root.querySelector('.kids').classList.add('group');
    }
});

define('project-map', `
<style>
:host { display: flex; flex-direction: column; flex: none; height: 347px; overflow: hidden; }
.grip { flex: none; width: 46px; margin: 2px auto 4px; border-top: 1px solid #aaa; }
.modes { display: flex; align-items: center; gap: 1px; height: 19px; padding-left: 1px; --w: 19px; --h: 18px; margin-bottom: 1px; }
.modes span { flex: 1; }
.map { flex: 1; min-height: 0; display: flex; overflow: hidden; }
.tree { flex: 1; overflow: hidden; background: #fff; padding-left: 6px; }
.bar { width: 7px; display: flex; flex-direction: column; align-items: center; background: #f0f0f0; border-left: 1px solid #ddd; }
.bar i { margin: 4px 0; border: 2px solid transparent; border-bottom: 3px solid #666; border-top: 0; }
.bar .dn { margin-top: auto; border-top: 3px solid #333; border-bottom: 0; }
.thumb { align-self: stretch; height: 193px; border: 1px solid #aaa; border-right: 0; border-radius: 2px 0 0 2px; background: repeating-linear-gradient(#777 0 1px, #f6f6f6 1px 2px) center / 4px 5px no-repeat #f6f6f6; }
.actions { flex: none; display: flex; align-items: center; justify-content: flex-end; gap: 3px; height: 26px; --icon: 13px; }
</style>
<div class="grip"></div>
<div class="modes">
    <tool-button icon="tree" side boxed style="--w:28px"></tool-button><span></span>
    <tool-button icon="homes"></tool-button><tool-button icon="folder" pressed></tool-button><tool-button icon="book"></tool-button><tool-button icon="docs" style="--w:14px"></tool-button>
</div>
<div class="map">
    <div class="tree">
        <tree-node icon="root" label="无标题">
            <tree-node icon="folderB" label="场地"></tree-node>
            <tree-node icon="folderS" label="平面图">
                <tree-node icon="folderB" label="3. 楼层"></tree-node><tree-node icon="folderB" label="2. 楼层"></tree-node><tree-node icon="folderB" label="1. 首层"></tree-node>
            </tree-node>
            <tree-node icon="folderS" label="吊顶平面图">
                <tree-node icon="folderB" label="3. 楼层"></tree-node><tree-node icon="folderB" label="2. 楼层"></tree-node><tree-node icon="folderB" label="1. 首层"></tree-node>
            </tree-node>
            <tree-node icon="folderS" label="结构平面图">
                <tree-node icon="folderB" label="3. 楼层"></tree-node><tree-node icon="folderB" label="2. 楼层"></tree-node><tree-node icon="folderB" label="1. 首层"></tree-node>
            </tree-node>
            <tree-node icon="sectS" label="剖面图"></tree-node>
            <tree-node icon="elevS" label="立面图">
                <tree-node icon="elevB" label="北向立面图"></tree-node><tree-node icon="elevB" label="东向立面图"></tree-node><tree-node icon="elevB" label="南向立面图"></tree-node><tree-node icon="elevB" label="西向立面图"></tree-node>
            </tree-node>
            <tree-node icon="interior" label="室内立面图"></tree-node>
        </tree-node>
    </div>
    <div class="bar"><i></i><div class="thumb"></div><i class="dn"></i></div>
</div>
<div class="actions"><tool-button icon="copyB" dim></tool-button><tool-button icon="addView"></tool-button><tool-button icon="addFolder"></tool-button><tool-button icon="link"></tool-button><tool-button icon="cross" style="--icon:10px;--w:14px"></tool-button></div>
`);

define('side-panel', `
<style>
:host { display: flex; flex-direction: column; width: 179px; border-left: 1px solid #ddd; overflow: hidden; }
p { margin: 0; padding: 13px 0; text-align: center; }
</style>
<trace-palette></trace-palette>
<project-map></project-map>
<palette-header>属性</palette-header>
<p>无选择。</p>
`);

define('status-bar', `
<style>
:host { display: flex; height: 6px; padding: 0 20px 0 3px; border-top: 1px solid #aaa; background: #f4f0f0; overflow: hidden; line-height: 12px; white-space: nowrap; }
span { flex: 1; }
.doc { width: 9px; height: 8px; margin: 2px 14px 0 0; border: 1px solid #444; border-top-width: 2px; background: #fff; }
.brand { color: #999; }
</style>
<span>点击一个元素或抓取一个选择区. 按住Ctrl+Shift 在元素和子元素间切换选择.</span>
<div class="doc"></div><div class="brand">GRAPHISOFT同步</div>
`);

define('cad-app', `
<style>
:host { display: grid; grid-template-rows: auto auto auto auto minmax(0, 1fr) auto; height: 100vh; min-width: 800px; overflow: hidden; }
main { display: grid; grid-template-columns: auto auto minmax(0, 1fr) auto; grid-template-rows: minmax(0, 1fr); min-height: 0; }
</style>
<title-bar></title-bar>
<menu-bar></menu-bar>
<main-toolbar></main-toolbar>
<info-box></info-box>
<main>
    <tool-box></tool-box>
    <team-panel></team-panel>
    <view-area></view-area>
    <side-panel></side-panel>
</main>
<status-bar></status-bar>
`);
</script>
</body>
</html>
